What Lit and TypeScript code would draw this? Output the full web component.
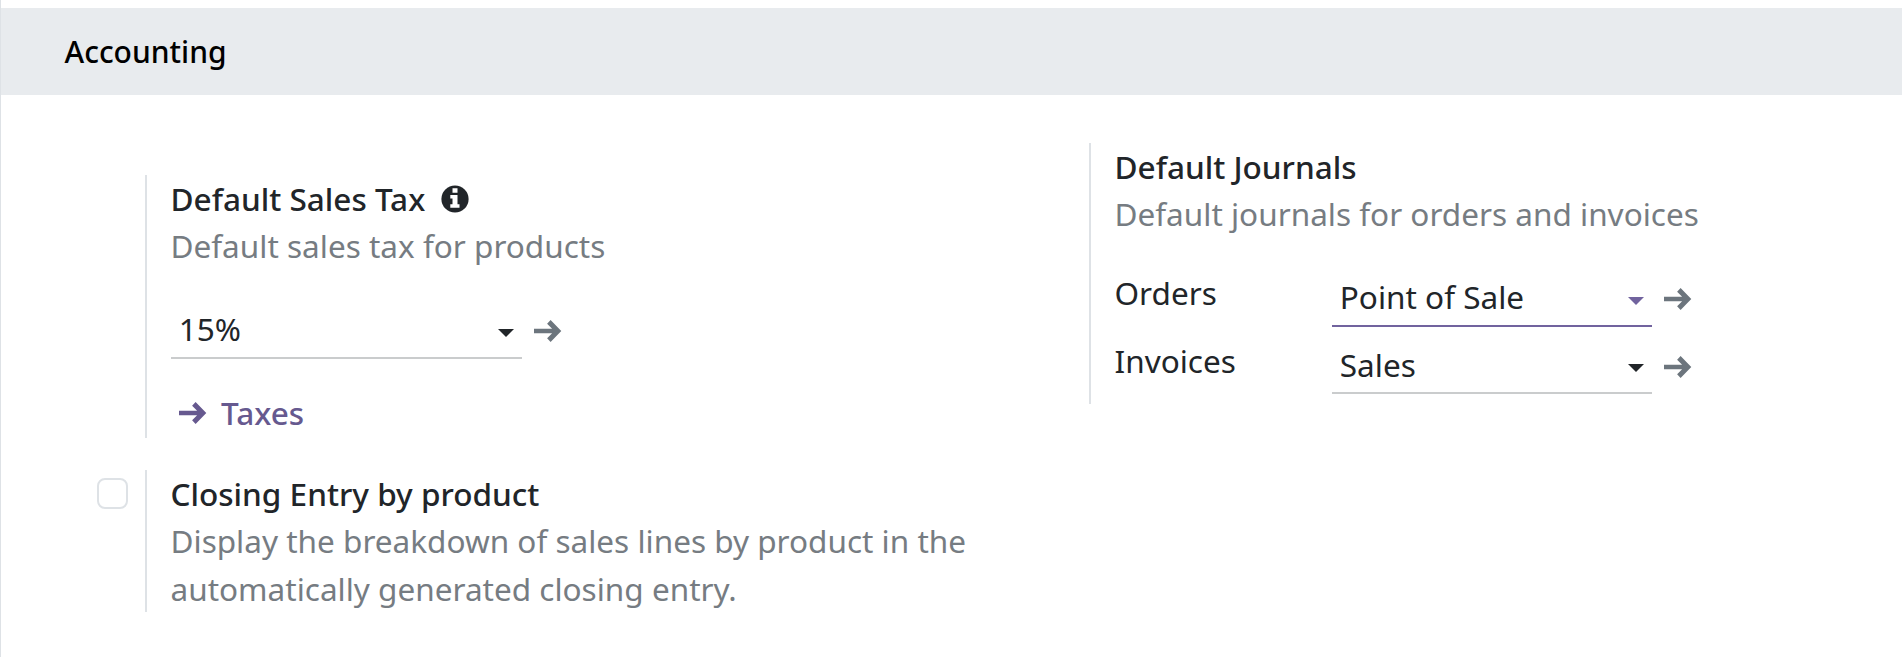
import { LitElement, html, css, svg } from "lit";
import { customElement, property } from "lit/decorators.js";
import { classMap } from "lit/directives/class-map.js";

const arrow = html`<svg class="arrow" width="28" height="24" viewBox="0 0 28 24" aria-hidden="true">
  ${svg`<path d="M0 9.8h18.1l-5-5L16.6 1 27.3 12 16.6 23l-3.5-3.8 5-5H0z" fill="currentColor"/>`}
</svg>`;

@customElement("select-field")
export class SelectField extends LitElement {
  @property() value = "";
  @property({ type: Boolean }) active = false;
  @property({ type: Boolean }) compact = false;

  static styles = css`
    :host { display: flex; align-items: flex-start; }
    .input {
      flex: 1;
      height: 50px;
      box-sizing: border-box;
      display: flex;
      align-items: flex-start;
      justify-content: space-between;
      padding: 0 8px 0 7.8px;
      border-bottom: 2px solid #cacccd;
    }
    .compact { height: 49px; }
    .active { border-bottom-color: #71639e; }
    .text { line-height: 40px; white-space: nowrap; }
    .caret { align-self: flex-end; margin-bottom: 20px; color: #212529; display: block; }
    .active .caret { color: #71639e; }
    .arrow { color: #6c757d; margin: 10px 0 0 11.5px; flex: none; }
  `;

  render() {
    return html`
      <div class=${classMap({ input: true, active: this.active, compact: this.compact })}>
        <span class="text">${this.value}</span>
        <svg class="caret" width="16" height="8" viewBox="0 0 16 8"><path d="M0 0h16L8 8z" fill="currentColor" /></svg>
      </div>
      ${arrow}
    `;
  }
}

@customElement("app-root")
export class AppRoot extends LitElement {
  static styles = css`
    :host {
      display: block;
      box-sizing: border-box;
      height: 657px;
      overflow: hidden;
      padding-top: 8px;
      border-left: 1px solid #dee2e6;
      background: #fff;
      color: #212529;
      font: 400 31.53px/47.33px "Noto Sans", sans-serif;
    }
    .band {
      height: 87px;
      box-sizing: border-box;
      padding: 21px 0 0 63.5px;
      margin: 0;
      background: #e8ebee;
      color: #000;
      font-size: 30px;
      line-height: 46px;
      font-weight: 500;
    }
    .columns { display: grid; grid-template-columns: 944px 1fr; align-items: start; }
    .left { padding: 80px 0 0 96px; display: grid; row-gap: 32px; }
    .right { padding: 48px 0 0 144px; }
    .setting { display: grid; grid-template-columns: 48px 1fr; }
    .pane { border-left: 2px solid #dee2e6; padding-left: 23.5px; }
    .tax { height: 263px; box-sizing: border-box; }
    .entry { height: 142px; }
    .journals { height: 261px; }
    .title { font-weight: 500; display: flex; align-items: center; white-space: nowrap; }
    .info { margin: 1px 0 0 15.3px; }
    .hint { color: #767c82; white-space: nowrap; }
    .taxfield { width: 390.5px; margin: 39px 0 0 0.5px; }
    .link {
      display: flex;
      align-items: center;
      gap: 14px;
      margin: 30px 0 0 8.5px;
      color: #66598f;
      font-weight: 500;
    }
    .link .arrow { margin-top: 2px; }
    .check {
      width: 31px;
      height: 31px;
      box-sizing: border-box;
      border: 2px solid #dee2e6;
      border-radius: 8px;
      margin: 8px 0 0;
    }
    .row { display: grid; grid-template-columns: 217.5px 359.5px; height: 67px; }
    .row.first { margin-top: 39px; height: 68px; }
    .label { line-height: 32px; }
  `;

  render() {
    return html`
      <h2 class="band">Accounting</h2>
      <div class="columns">
        <div class="left">
          <section class="setting">
            <span></span>
            <div class="pane tax">
              <div class="title">
                Default Sales Tax
                <svg class="info" width="28" height="28" viewBox="0 0 28 28">
                  <circle cx="14" cy="14" r="13.6" fill="currentColor" />
                  <path d="M11.5 3.3h5v4.4h-5zM9.3 10h7.2v9.2h2v3.5H9.3v-3.5h2.2v-5.7H9.3z" fill="#fff" />
                </svg>
              </div>
              <div class="hint">Default sales tax for products</div>
              <select-field class="taxfield" value="15%"></select-field>
              <div class="link">${arrow}<span>Taxes</span></div>
            </div>
          </section>
          <section class="setting">
            <div class="check" role="checkbox" aria-checked="false"></div>
            <div class="pane entry">
              <div class="title">Closing Entry by product</div>
              <div class="hint">Display the breakdown of sales lines by product in the<br />automatically generated closing entry.</div>
            </div>
          </section>
        </div>
        <div class="right">
          <section class="pane journals">
            <div class="title">Default Journals</div>
            <div class="hint">Default journals for orders and invoices</div>
            <div class="row first">
              <span class="label">Orders</span>
              <select-field value="Point of Sale" active></select-field>
            </div>
            <div class="row">
              <span class="label">Invoices</span>
              <select-field value="Sales" compact></select-field>
            </div>
          </section>
        </div>
      </div>
    `;
  }
}
